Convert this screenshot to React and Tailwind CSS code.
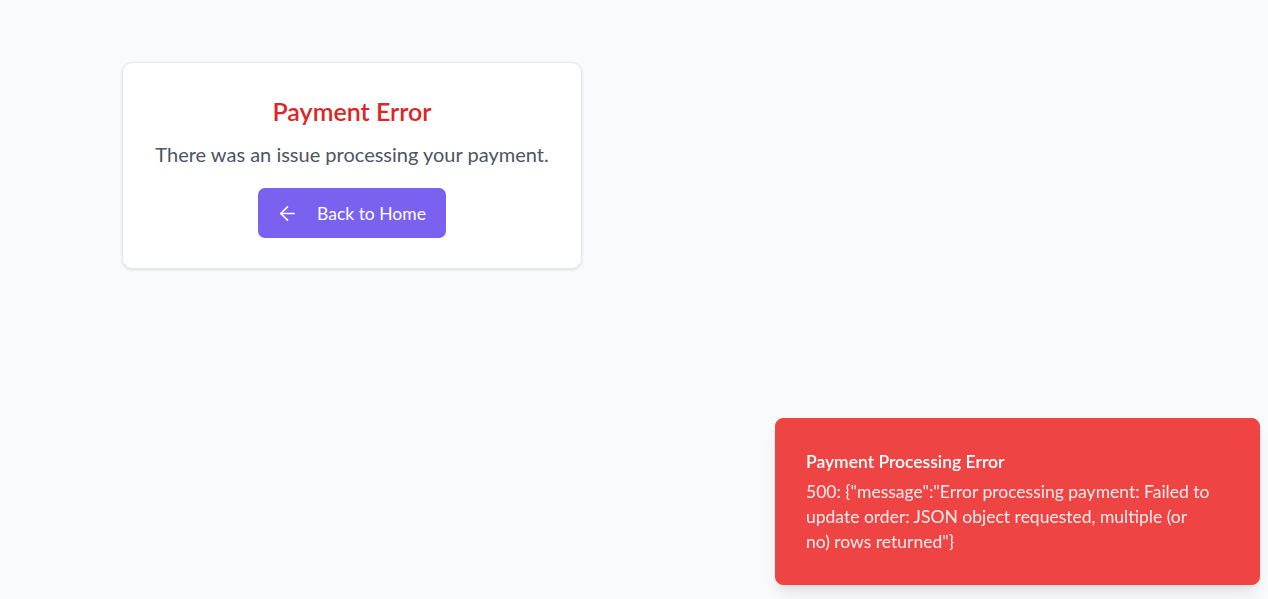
import { ArrowLeft } from 'lucide-react';

export default function App() {
    return (
        <div className="relative min-h-screen bg-[#f9fafb] font-['Lato',sans-serif]">
            {/* Error card */}
            <div className="pt-[62px] pl-[122px]">
                <div className="w-[460px] rounded-[10px] border border-[#e5e7eb] bg-white p-[30px] text-center shadow-sm">
                    <h1 className="mt-[1px] mb-[10px] text-[25px] leading-[35px] font-semibold text-[#dc2626]">Payment Error</h1>
                    <p className="mb-[19px] text-[20px] leading-[30px] text-[#4b5563]">There was an issue processing your payment.</p>
                    <button className="inline-flex h-[50px] items-center gap-[18px] rounded-[7px] bg-[#7b61ef] pr-[20px] pl-[18px] text-[17.5px] text-white">
                        <ArrowLeft size={23} strokeWidth={1.75} />
                        <span className="mt-[3px]">Back to Home</span>
                    </button>
                </div>
            </div>

            {/* Toast */}
            <div className="fixed right-[8px] bottom-[14px] w-[485px] rounded-[8px] border border-[#ef4444] bg-[#ef4444] p-[30px] pr-[46px] text-white shadow-lg">
                <div className="grid gap-[5px]">
                    <div className="text-[17.5px] leading-[25px] font-semibold">Payment Processing Error</div>
                    <div className="text-[17.5px] leading-[25px] opacity-90">
                        500: {'{"message":"Error processing payment: Failed to update order: JSON object requested, multiple (or no) rows returned"}'}
                    </div>
                </div>
            </div>
        </div>
    );
}
